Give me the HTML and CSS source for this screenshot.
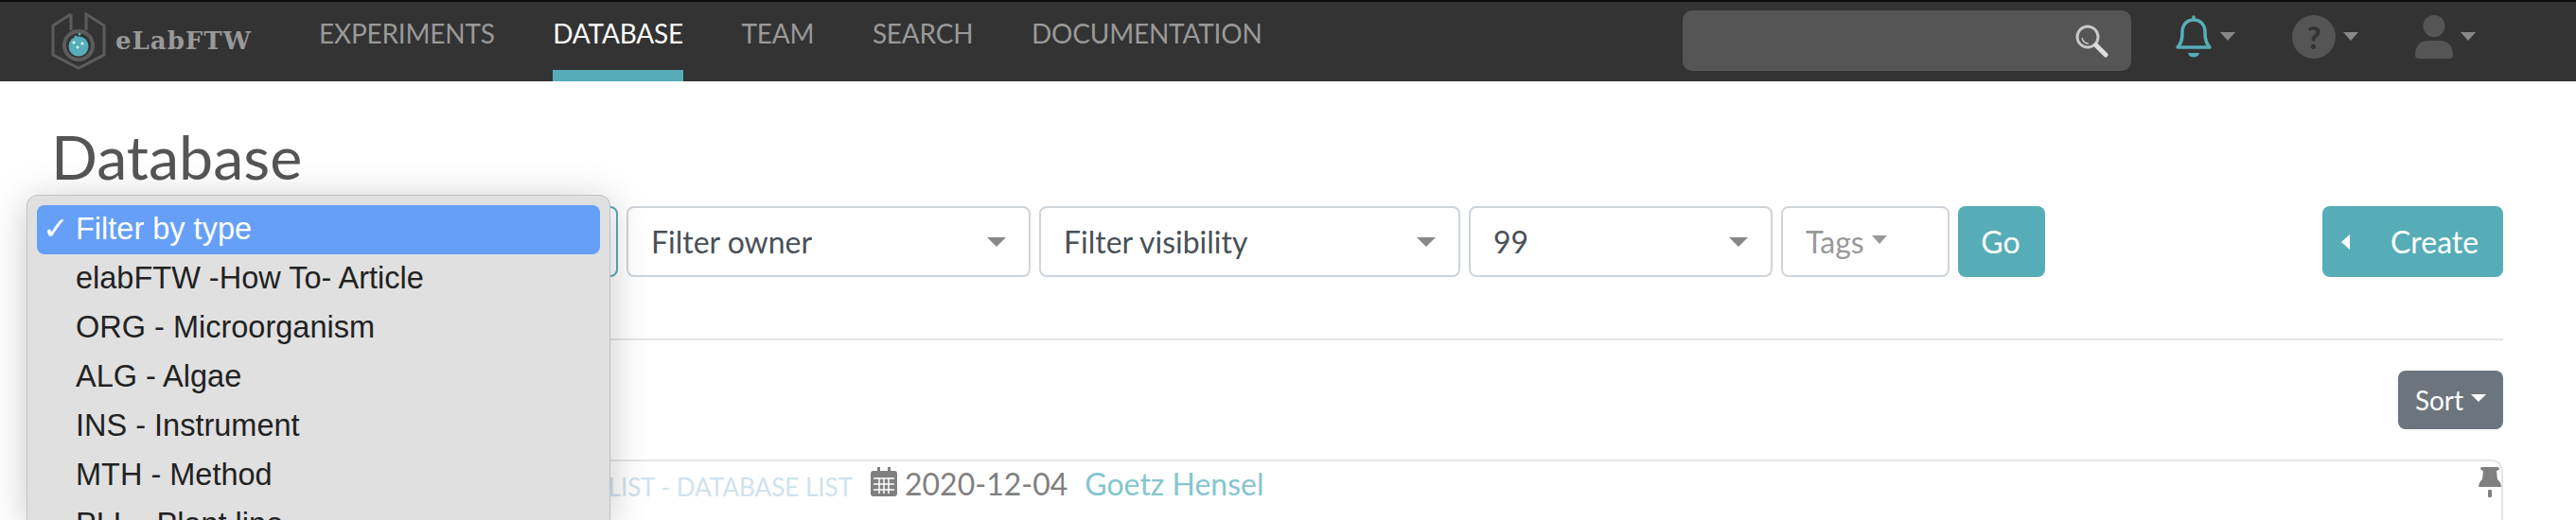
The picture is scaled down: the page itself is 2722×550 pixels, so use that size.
FILE: index.html
```html
<!DOCTYPE html>
<html lang="en">
<head>
  <meta charset="UTF-8"/>
  <title>eLabFTW - Database</title>
  <link rel="stylesheet" href="styles.css">
</head>
<body>
  <nav class="navbar">
    <a class="brand">
      <svg class="brand-logo" width="58" height="62" viewBox="0 0 58 62">
        <path d="M21 3 L2 15 V46 L29 60 L56 46 V15 L37 3 V20 M21 3 V20" fill="none" stroke="#5c5c5c" stroke-width="3"/>
        <circle cx="29" cy="36" r="15" fill="#333" stroke="#5c5c5c" stroke-width="4"/>
        <circle cx="29" cy="37" r="10.500" fill="#56adb7"/>
        <circle cx="24" cy="33" r="1.500" fill="#dff"/>
        <circle cx="33" cy="34" r="1.500" fill="#dff"/>
        <circle cx="28" cy="38" r="1.500" fill="#dff"/>
        <circle cx="30" cy="24" r="1.500" fill="#56adb7"/>
        <circle cx="26" cy="27" r="1.500" fill="#56adb7"/>
      </svg>
      <span class="brand-name">eLabFTW</span>
    </a>
    <a class="nav-link">EXPERIMENTS</a>
    <a class="nav-link active">DATABASE</a>
    <a class="nav-link">TEAM</a>
    <a class="nav-link">SEARCH</a>
    <a class="nav-link">DOCUMENTATION</a>

    <div class="nav-search">
      <svg width="36" height="36" viewBox="0 0 36 36">
        <circle cx="14" cy="14" r="11" fill="none" stroke="#c8c8c8" stroke-width="3"/>
        <path d="M8 15 A7 7 0 0 0 15 21" fill="none" stroke="#c8c8c8" stroke-width="1.500"/>
        <path d="M23 23 L33 33" stroke="#ddd" stroke-width="5" stroke-linecap="round"/>
      </svg>
    </div>

    <div class="nav-icon bell">
      <svg width="40" height="46" viewBox="0 0 40 46">
        <path d="M20 2 V5 M3 34 C8 29 8 23 8 18 C8 10 13 5 20 5 C27 5 32 10 32 18 C32 23 32 29 37 34 Z" fill="none" stroke="#56adb7" stroke-width="3.500" stroke-linecap="round" stroke-linejoin="round"/>
        <path d="M14 40 H26 C25 46 15 46 14 40 Z" fill="#56adb7"/>
      </svg>
      <span class="nav-caret"></span>
    </div>
    <div class="nav-icon help">
      <span class="help-circle">?</span>
      <span class="nav-caret"></span>
    </div>
    <div class="nav-icon user">
      <svg width="40" height="46" viewBox="0 0 40 46">
        <circle cx="20" cy="11.500" r="11.500" fill="#555"/>
        <path d="M0 42 C0 32 6 27 14 27 H26 C34 27 40 32 40 42 Q40 46 36 46 H4 Q0 46 0 42 Z" fill="#555"/>
      </svg>
      <span class="nav-caret"></span>
    </div>
  </nav>

  <main class="page">
    <h1>Database</h1>

    <div class="filters">
      <div class="filter-select focused w-type"></div>
      <div class="filter-select w-owner"><span>Filter owner</span><i class="caret"></i></div>
      <div class="filter-select w-vis"><span>Filter visibility</span><i class="caret"></i></div>
      <div class="filter-select w-limit"><span>99</span><i class="caret"></i></div>
      <div class="tags-btn">Tags<i class="caret small"></i></div>
      <button class="btn go">Go</button>
      <button class="btn create"><i class="arrow-left"></i>Create</button>
    </div>

    <hr class="divider">

    <div class="sort-row">
      <button class="sort-btn">Sort<i class="caret-white"></i></button>
    </div>

    <article class="item">
      <span class="item-cat">LIST - DATABASE LIST</span>
      <svg class="calendar" width="28" height="31" viewBox="0 0 28 31">
        <path d="M7 0 H10 V4 H18 V0 H21 V4 H25 Q28 4 28 7 V28 Q28 31 25 31 H3 Q0 31 0 28 V7 Q0 4 3 4 H7 Z" fill="#808080"/>
        <path d="M3 12 H25 M3 18 H25 M3 24 H25 M9 11 V28 M14 11 V28 M19 11 V28" stroke="#fff" stroke-width="1.500"/>
      </svg>
      <span class="item-date">2020-12-04</span>
      <a class="item-owner">Goetz Hensel</a>
      <svg class="pin" width="24" height="32" viewBox="0 0 24 32">
        <path d="M4 0 H20 Q22 0 22 2 Q22 3 19 4 L20 13 Q24 16 24 21 H0 Q0 16 4 13 L5 4 Q2 3 2 2 Q2 0 4 0 Z" fill="#808080"/>
        <rect x="10" y="24" width="4" height="8" rx="1" fill="#808080"/>
      </svg>
    </article>
  </main>

  <!-- native select popup, open over the first filter -->
  <ul class="select-menu">
    <li class="selected"><b class="check">✓</b>Filter by type</li>
    <li>elabFTW -How To- Article</li>
    <li>ORG - Microorganism</li>
    <li>ALG - Algae</li>
    <li>INS - Instrument</li>
    <li>MTH - Method</li>
    <li>PLL - Plant line</li>
  </ul>
</body>
</html>
```

FILE: styles.css
```css
* { box-sizing:border-box; }
html, body { height:550px; overflow:hidden; }
body { margin:0; background:#fff; font-family:'Lato', sans-serif; color:#495057; position:relative; }

.navbar { height:86px; background:#333; border-top:2px solid #0c0c0c; display:flex; align-items:stretch; padding-left:54px; }
.brand { display:flex; align-items:center; width:283px; gap:10px; margin-top:-2px; }
.brand-logo { flex:none; }
.brand-name { font-family:'DejaVu Serif', serif; font-weight:bold; font-size:26px; color:#999; letter-spacing:1px; }
.nav-link { font-size:28px; color:#999; line-height:42px; padding-top:12px; margin-right:61.500px; border-bottom:12px solid transparent; letter-spacing:-0.2px; }
.nav-link.active { color:#fff; border-bottom-color:#56adb7; }

.nav-search { margin:9px 0 0 383px; width:474px; height:64px; background:#555; border-radius:10px; display:flex; justify-content:flex-end; align-items:center; padding-right:24px; }
.nav-icon { display:flex; align-items:center; height:46px; margin-top:14px; }
.nav-icon.bell { margin-left:46px; }
.nav-icon.help { margin-left:60px; }
.nav-icon.user { margin-left:60px; }
.nav-caret { width:0; height:0; border:8px solid transparent; border-top:9px solid #888; border-bottom:0; margin-left:8px; margin-top:-2px; }
.help-circle { width:46px; height:46px; border-radius:50%; background:#555; color:#333; font-weight:900; font-size:32px; display:flex; align-items:center; justify-content:center; }

.page { padding:0 77px 0 54px; }
h1 { margin:0; height:132px; padding-top:40px; font-size:64.500px; font-weight:400; line-height:78px; color:#555; }

.filters { display:flex; gap:9px; height:75px; }
.filter-select { display:flex; align-items:center; justify-content:space-between; padding:0 24px; border:2px solid #ced4da; border-radius:8px; font-size:32px; background:#fff; }
.filter-select.focused { border-color:#56adb7; }
.w-type { width:599px; }
.w-owner { width:427px; }
.w-vis { width:445px; }
.w-limit { width:321px; }
.caret { width:0; height:0; border:10px solid transparent; border-top:10px solid #888; border-bottom:0; }
.caret.small { border-width:9px 8px 0; border-top-color:#999; margin:-4px 0 0 8px; display:inline-block; vertical-align:middle; }
.tags-btn { width:178px; border:2px solid #ced4da; border-radius:8px; font-size:32px; color:#999; display:flex; align-items:center; padding-left:24px; }
.btn { border:0; border-radius:8px; background:#56adb7; color:#fff; font:32px 'Lato', sans-serif; padding:0; }
.btn.go { width:92px; padding-right:2px; }
.btn.create { width:191px; margin-left:auto; display:flex; align-items:center; padding-left:20px; gap:43px; }
.arrow-left { width:0; height:0; border:8px solid transparent; border-right:9px solid #fff; border-left:0; }

.divider { border:0; border-top:2px solid #e5e5e5; margin:65px 0 0; }
.sort-row { display:flex; justify-content:flex-end; margin-top:32px; }
.sort-btn { width:111px; height:62px; border:0; border-radius:8px; background:#6c757d; color:#fff; font:28px 'Lato', sans-serif; padding:0; display:flex; align-items:center; justify-content:center; gap:8px; }
.caret-white { width:0; height:0; border:8px solid transparent; border-top:8px solid #fff; border-bottom:0; margin-top:-4px; }

.item { margin-top:32px; height:120px; border:2px solid #e5e5e5; border-bottom:0; border-radius:12px 12px 0 0; display:flex; align-items:flex-start; padding:6px 0 0 0; }
.item-cat { margin-left:583px; width:262px; font-size:26px; color:#cfe2ee; line-height:42px; text-align:right; }
.calendar { margin-left:19px; }
.item-date { font-size:32px; color:#808080; line-height:36px; margin-left:8px; }
.item-owner { font-size:32px; color:#85c5cf; line-height:36px; margin-left:18px; }
.pin { margin-left:auto; }

.select-menu { position:absolute; left:28px; top:206px; width:617px; height:344px; margin:0; padding:10px; list-style:none; background:#e0e0e0; border:1px solid #c2c2c2; border-bottom:0; border-radius:12px 12px 0 0; box-shadow:0 6px 40px rgba(0,0,0,0.22); font-family:'Liberation Sans', sans-serif; font-size:32.500px; color:#222; overflow:hidden; }
.select-menu li { height:52px; line-height:50px; padding-left:41px; border-radius:8px; position:relative; white-space:nowrap; }
.select-menu li.selected { background:#659ff8; color:#fff; }
.check { position:absolute; left:6px; font-family:'DejaVu Sans', sans-serif; font-weight:700; font-size:33px; }
```
